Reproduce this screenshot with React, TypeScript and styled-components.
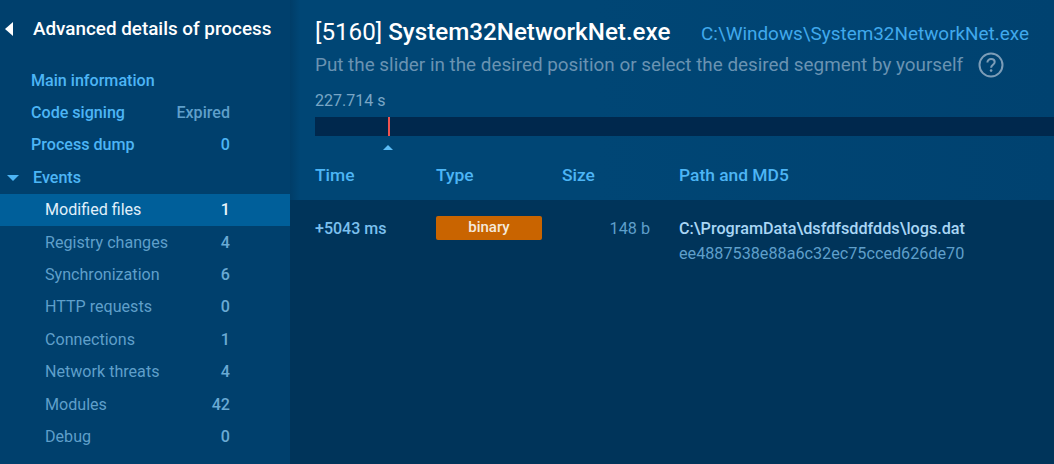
import React from "react";
import styled, { createGlobalStyle } from "styled-components";

const GlobalStyle = createGlobalStyle`
  html, body {
    margin: 0;
    padding: 0;
    height: 100%;
    background: #00345a;
    font-family: Roboto, "Liberation Sans", sans-serif;
  }
  #root {
    height: 100%;
  }
`;

const Page = styled.div`
  display: flex;
  width: 1054px;
  height: 464px;
  overflow: hidden;
`;

const Sidebar = styled.aside`
  width: 290px;
  flex-shrink: 0;
  background: #00406d;
  display: flex;
  flex-direction: column;
`;

const SidebarHeader = styled.div`
  height: 64px;
  display: flex;
  align-items: center;
  gap: 20px;
  padding-left: 5px;
`;

const BackArrow = styled.span`
  width: 0;
  height: 0;
  margin-top: -6px;
  border-top: 7px solid transparent;
  border-bottom: 7px solid transparent;
  border-right: 8px solid #ffffff;
`;

const SidebarTitle = styled.div`
  font-size: 18.85px;
  font-weight: 500;
  color: #ffffff;
  position: relative;
  top: -3px;
`;

const MenuRow = styled.div<{ $active?: boolean; $indent: number }>`
  height: 32.4px;
  display: flex;
  align-items: center;
  justify-content: space-between;
  padding: 0 60px 0 ${(p) => p.$indent}px;
  font-size: 16.1px;
  background: ${(p) => (p.$active ? "#005f9a" : "transparent")};
  box-sizing: border-box;
`;

const MenuLabel = styled.span<{ $tone: "link" | "muted" | "active" }>`
  display: flex;
  align-items: center;
  font-weight: ${(p) => (p.$tone === "link" ? 500 : 400)};
  color: ${(p) =>
    p.$tone === "link" ? "#4db5f5" : p.$tone === "active" ? "#e0f0fa" : "#5f9fca"};
`;

const MenuValue = styled.span<{ $tone: "link" | "muted" | "active" | "dim" }>`
  font-weight: 500;
  color: ${(p) =>
    p.$tone === "link"
      ? "#4db5f5"
      : p.$tone === "active"
        ? "#e8f4fb"
        : p.$tone === "dim"
          ? "#5f9fca"
          : "#6aaad4"};
`;

const EventsArrow = styled.span`
  width: 0;
  height: 0;
  border-left: 6px solid transparent;
  border-right: 6px solid transparent;
  border-top: 6px solid #4db5f5;
  margin: 1px 14px 0 7px;
`;

const Main = styled.main`
  flex: 1;
  min-width: 0;
  display: flex;
  flex-direction: column;
`;

const TopPanel = styled.section`
  height: 200px;
  box-sizing: border-box;
  padding: 17px 25px 0;
  background: linear-gradient(90deg, #003d68 0, #004675 10px, #004675 40%, #004270 100%);
  display: flex;
  flex-direction: column;
`;

const TitleLine = styled.div`
  display: flex;
  align-items: baseline;
  justify-content: space-between;
`;

const ProcessTitle = styled.h1`
  margin: 0;
  font-size: 24.2px;
  line-height: 30px;
  font-weight: 400;
  color: #ffffff;
`;

const ProcessName = styled.span`
  font-weight: 500;
`;

const ProcessPath = styled.span`
  font-size: 18.9px;
  color: #40a9ec;
`;

const HintLine = styled.div`
  display: flex;
  align-items: center;
  gap: 15px;
  height: 30px;
  margin-top: 3px;
  font-size: 18.85px;
  color: #6a93b2;
`;

const HelpIcon = styled.svg`
  width: 26px;
  height: 26px;
  display: block;
`;

const Duration = styled.div`
  margin-top: 11px;
  height: 20px;
  line-height: 20px;
  font-size: 16px;
  color: #79a6c6;
`;

const Track = styled.div`
  margin: 6px 0 0;
  height: 19px;
  width: 739px;
  background: #00284d;
  position: relative;
`;

const Marker = styled.div`
  position: absolute;
  left: 73px;
  top: 0;
  bottom: 0;
  width: 2px;
  background: #ef5350;
`;

const Thumb = styled.div`
  width: 0;
  height: 0;
  margin: 9px 0 0 68px;
  border-left: 5px solid transparent;
  border-right: 5px solid transparent;
  border-bottom: 5px solid #5cbcf5;
`;

const HeadRow = styled.div`
  display: grid;
  grid-template-columns: 121px 126px 117px 1fr;
  margin-top: 15px;
  font-size: 17.4px;
  font-weight: 500;
  color: #4db5f5;
`;

const BodyPanel = styled.section`
  flex: 1;
  background: #00345a;
  padding: 16px 25px 0;
`;

const DataRow = styled.div`
  display: grid;
  grid-template-columns: 121px 126px 88px 1fr;
  align-items: start;
`;

const TimeCell = styled.div`
  font-size: 16px;
  font-weight: 500;
  line-height: 26px;
  color: #7cc0ee;
`;

const TypeBadge = styled.div`
  width: 106px;
  height: 24px;
  line-height: 22px;
  border-radius: 2px;
  background: #c96400;
  color: #f4e9dc;
  font-size: 15px;
  font-weight: 500;
  text-align: center;
`;

const SizeCell = styled.div`
  font-size: 16.2px;
  line-height: 26px;
  text-align: right;
  color: #5f9fca;
`;

const PathCell = styled.div`
  padding-left: 29px;
`;

const FilePath = styled.div`
  font-size: 16.2px;
  font-weight: 500;
  line-height: 25px;
  color: #a9d6f5;
`;

const FileHash = styled.div`
  font-size: 16.2px;
  line-height: 26px;
  color: #5f9fca;
`;

const events: [string, string][] = [
  ["Registry changes", "4"],
  ["Synchronization", "6"],
  ["HTTP requests", "0"],
  ["Connections", "1"],
  ["Network threats", "4"],
  ["Modules", "42"],
  ["Debug", "0"],
];

export default function App() {
  return (
    <Page>
      <GlobalStyle />
      <Sidebar>
        <SidebarHeader>
          <BackArrow />
          <SidebarTitle>Advanced details of process</SidebarTitle>
        </SidebarHeader>
        <MenuRow $indent={31}>
          <MenuLabel $tone="link">Main information</MenuLabel>
        </MenuRow>
        <MenuRow $indent={31}>
          <MenuLabel $tone="link">Code signing</MenuLabel>
          <MenuValue $tone="dim">Expired</MenuValue>
        </MenuRow>
        <MenuRow $indent={31}>
          <MenuLabel $tone="link">Process dump</MenuLabel>
          <MenuValue $tone="link">0</MenuValue>
        </MenuRow>
        <MenuRow $indent={0}>
          <MenuLabel $tone="link">
            <EventsArrow />
            Events
          </MenuLabel>
        </MenuRow>
        <MenuRow $indent={45} $active>
          <MenuLabel $tone="active">Modified files</MenuLabel>
          <MenuValue $tone="active">1</MenuValue>
        </MenuRow>
        {events.map(([label, count]) => (
          <MenuRow $indent={45} key={label}>
            <MenuLabel $tone="muted">{label}</MenuLabel>
            <MenuValue $tone="muted">{count}</MenuValue>
          </MenuRow>
        ))}
      </Sidebar>
      <Main>
        <TopPanel>
          <TitleLine>
            <ProcessTitle>
              [5160] <ProcessName>System32NetworkNet.exe</ProcessName>
            </ProcessTitle>
            <ProcessPath>C:\Windows\System32NetworkNet.exe</ProcessPath>
          </TitleLine>
          <HintLine>
            Put the slider in the desired position or select the desired segment by yourself
            <HelpIcon viewBox="0 0 26 26" fill="none">
              <circle cx="13" cy="13" r="11.5" stroke="#7c9db8" strokeWidth="2" />
              <path
                d="M9.4 10.4c0-2.1 1.6-3.4 3.7-3.4s3.6 1.3 3.6 3.1c0 2.6-3.6 2.8-3.6 5.6"
                stroke="#7c9db8"
                strokeWidth="2"
              />
              <circle cx="13.1" cy="18.6" r="1.3" fill="#7c9db8" />
            </HelpIcon>
          </HintLine>
          <Duration>227.714 s</Duration>
          <Track>
            <Marker />
          </Track>
          <Thumb />
          <HeadRow>
            <span>Time</span>
            <span>Type</span>
            <span>Size</span>
            <span>Path and MD5</span>
          </HeadRow>
        </TopPanel>
        <BodyPanel>
          <DataRow>
            <TimeCell>+5043 ms</TimeCell>
            <TypeBadge>binary</TypeBadge>
            <SizeCell>148 b</SizeCell>
            <PathCell>
              <FilePath>C:\ProgramData\dsfdfsddfdds\logs.dat</FilePath>
              <FileHash>ee4887538e88a6c32ec75cced626de70</FileHash>
            </PathCell>
          </DataRow>
        </BodyPanel>
      </Main>
    </Page>
  );
}
